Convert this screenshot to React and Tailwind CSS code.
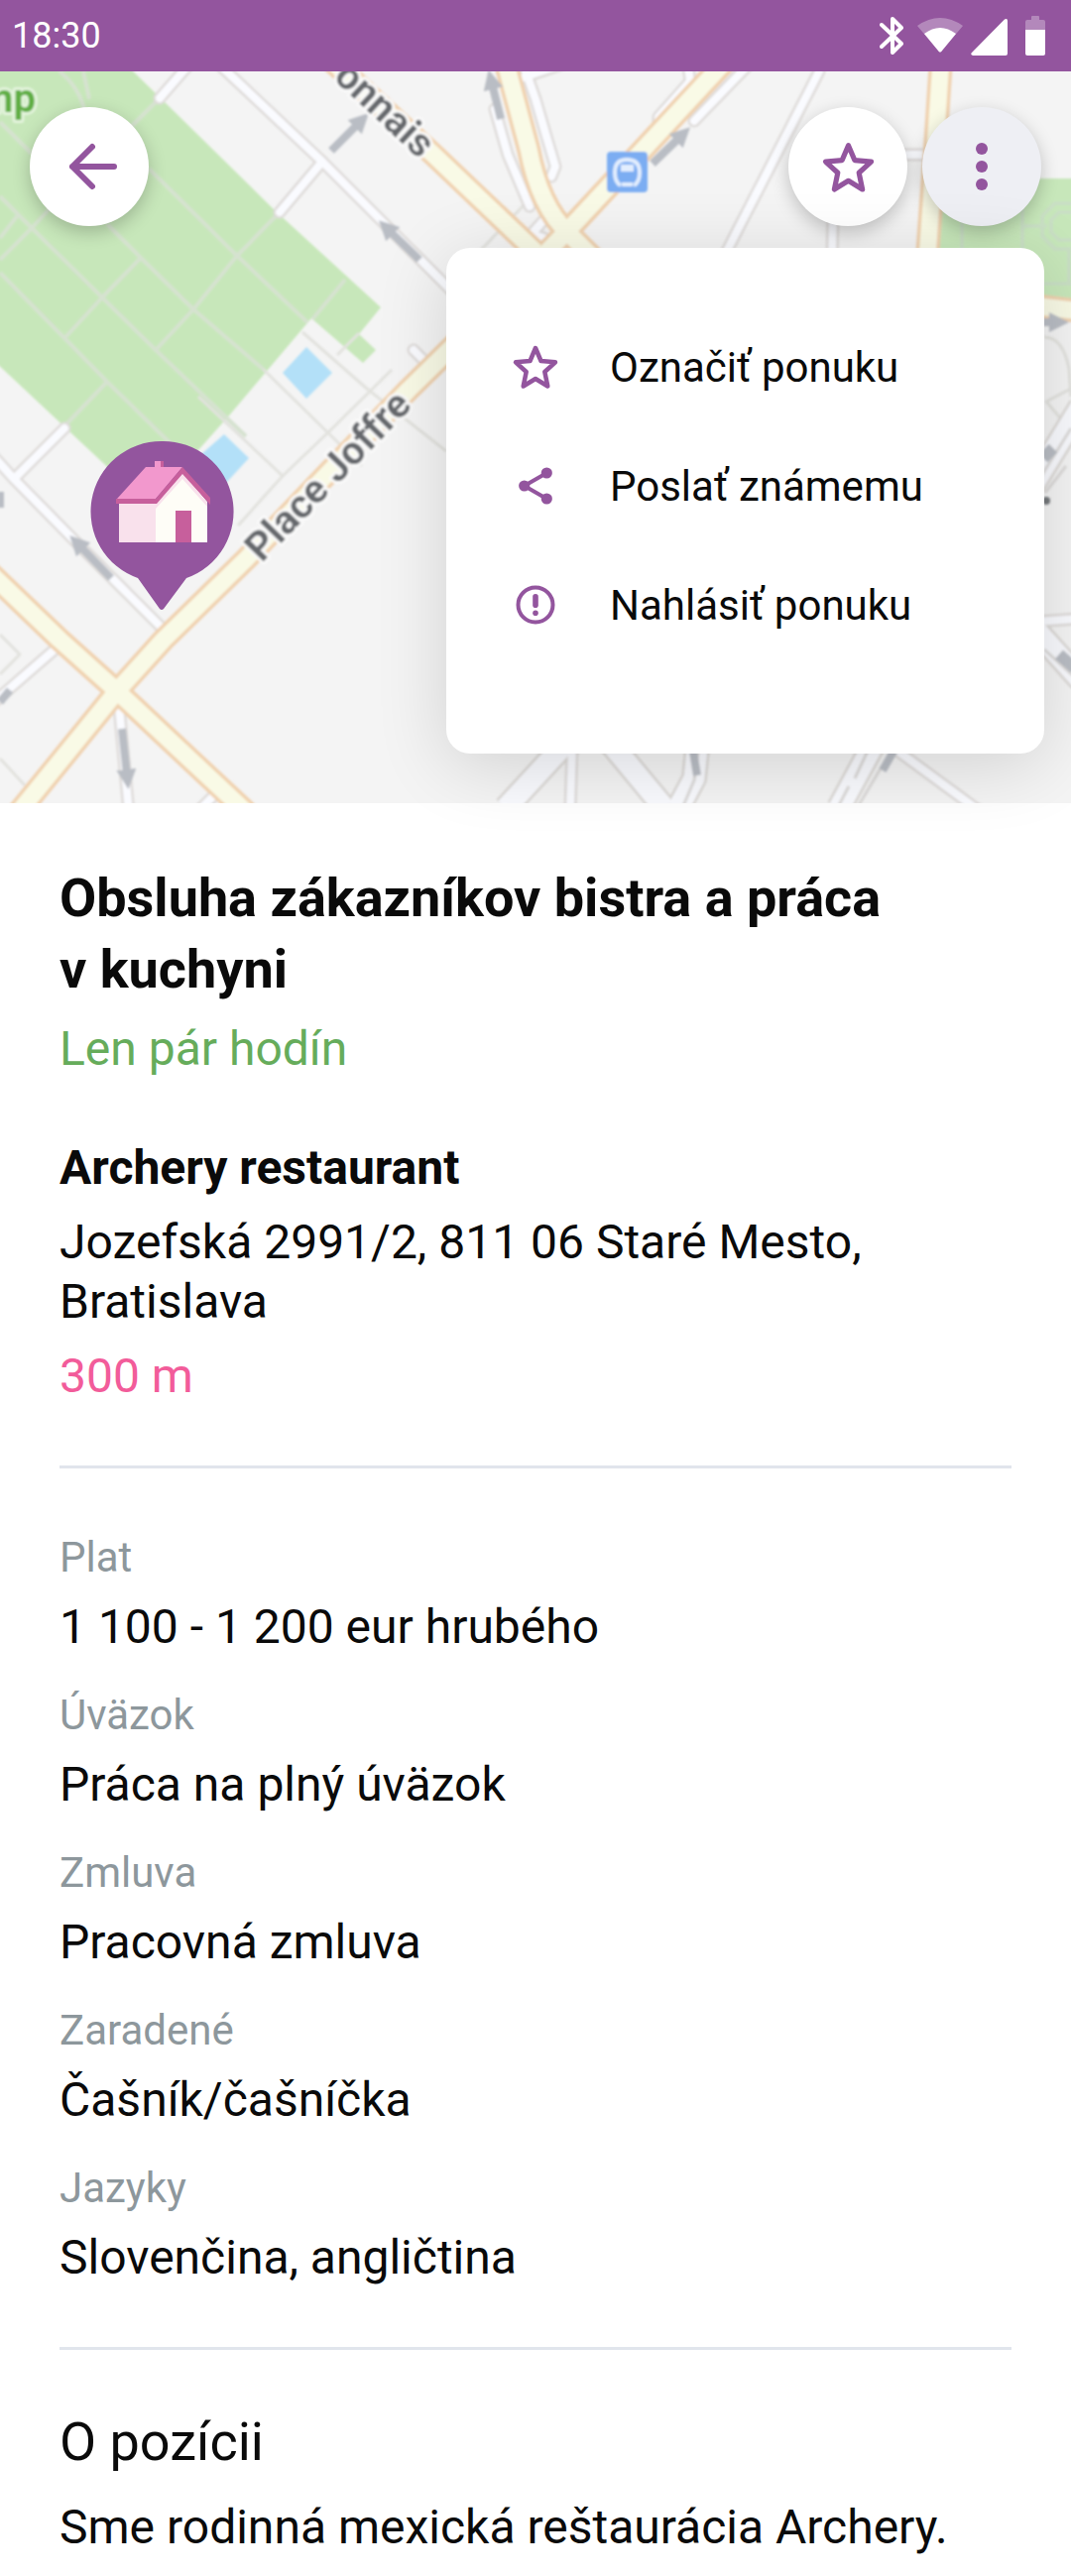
import React from 'react';

const details = [
  { label: 'Plat', value: '1 100 - 1 200 eur hrubého' },
  { label: 'Úväzok', value: 'Práca na plný úväzok' },
  { label: 'Zmluva', value: 'Pracovná zmluva' },
  { label: 'Zaradené', value: 'Čašník/čašníčka' },
  { label: 'Jazyky', value: 'Slovenčina, angličtina' },
];

// main streets, yellow with orange edges
const mainRoads = [
  'M320 48 L436 155 L540 254',
  'M509 60 L533 150 Q544 208 573 235 L600 262',
  'M733 60 L640 160 L573 232 L536 270',
  'M949 60 L943 150 L935 260',
  'M1040 308 L1090 314',
  'M-10 578 L60 645 L118 697 L260 830',
  'M10 830 L118 697 L165 645 L248 564 L330 478 L412 393 L460 346',
];

// side streets, white with grey edges
const sideRoads = [
  'M188 68 L161 99',
  'M222 66 L325 163 L385 223 L460 298',
  'M325 163 L282 214',
  'M499 110 L512 156 L534 208',
  'M526 60 L540 100 L560 168 L556 178',
  'M528 78 L575 62',
  'M826 72 L732 255',
  'M912 156 L936 156',
  'M840 220 L839 260',
  'M760 60 L700 122',
  'M694 68 L696 82 L664 118 L664 132',
  'M552 218 L536 236 L548 240',
  'M65 432 L14 483',
  'M-5 462 L14 483 L75 545 L168 638',
  'M54 656 L-6 708',
  'M120 712 L130 820',
  'M218 800 L198 820',
  'M417 353 L434 370',
  'M1045 627 L1085 624',
  'M577 755 L575 815',
  'M902 755 L985 816',
];

const wideRoads = [
  'M570 750 L510 815',
  'M612 745 L670 815',
  'M704 745 L700 785 L684 815',
  'M884 745 L846 815',
  'M1090 410 L1035 500',
  'M1035 625 L1090 686',
];

// footpaths crossing the park
const parkPaths = [
  'M0 123 L32 155',
  'M0 198 L32 230 L103 300 L157 353 L248 440',
  'M108 226 L142 260 L195 312 L265 372',
  'M150 170 L239 258 L310 325',
  'M0 275 L65 341 L108 385 L180 455',
  'M0 262 L32 230 L55 205',
  'M0 240 L18 217',
  'M65 341 L103 300 L142 260',
  'M60 435 L108 385',
  'M157 353 L195 312 L239 258 L282 214',
  'M315 322 L348 282',
  'M60 72 Q86 92 88 130',
  'M84 72 L90 100',
  'M160 100 L130 130',
];

const footPaths = [
  'M265 372 L365 470',
  'M305 335 L370 392 L450 455',
  'M200 400 L285 480 L240 530',
  'M285 480 L330 437 L395 373',
  'M340 358 L362 336',
  'M0 640 L20 660 L0 680',
  'M0 765 L25 792',
  'M485 252 L530 205',
  'M1053 340 Q1072 340 1078 372 L1080 400',
  'M1072 425 L1055 405 L1080 392',
];

const arrows = [
  'M334 152 L362 124',
  'M423 262 L392 232',
  'M505 120 L496 84',
  'M658 165 L686 138',
  'M112 583 L80 550',
  'M123 735 L128 782',
  'M1052 325 L1064 325',
];

const StreetMap = () => (
  <svg
    viewBox="0 72 1080 738"
    preserveAspectRatio="xMidYMid slice"
    className="absolute inset-0 h-full w-full"
    aria-hidden="true"
  >
    <defs>
      <marker id="tip" viewBox="0 0 10 10" refX="3" refY="5" markerWidth="20" markerHeight="20" markerUnits="userSpaceOnUse" orient="auto">
        <path d="M0 0 L10 5 L0 10 Z" fill="#b9bdc4" />
      </marker>
      <filter id="soft" x="0" y="0" width="100%" height="100%">
        <feGaussianBlur stdDeviation="1" />
      </filter>
    </defs>
    <rect x="0" y="72" width="1080" height="738" fill="#f4f4f4" />
    <g filter="url(#soft)" fill="none" strokeLinejoin="round">
      {/* parks */}
      <path d="M-5 60 H122 L165 102 L278 213 L384 310 L362 337 L379 353 L366 366 L314 321 L232 418 L150 510 L-5 365 Z" fill="#c7e7ba" />
      <path d="M946 180 H1090 V306 L942 300 Z" fill="#c7e7ba" />
      <path d="M970 222 V300 M1031 182 V286 H1090 M1031 228 H1056 M1090 205 H1064 L1051 218 V238 L1064 251 H1090 M1078 251 V286 M1090 214 H1068 L1060 222 V234 L1068 242 H1090" stroke="#c9dfc4" strokeWidth="4" />
      {/* water */}
      <path d="M309 350 L335 376 L309 402 L285 376 Z M226 438 L251 462 L228 487 L195 465 Z" fill="#b3e0f8" />

      <g stroke="#e2e2de" strokeWidth="3">
        {footPaths.map((d) => <path key={d} d={d} />)}
      </g>
      <g stroke="#d6e2d0" strokeWidth="4">
        {parkPaths.map((d) => <path key={d} d={d} />)}
      </g>

      <g stroke="#dfdcda" strokeWidth="13">
        {sideRoads.map((d) => <path key={d} d={d} strokeLinecap="round" />)}
      </g>
      <g stroke="#dcd9d6" strokeWidth="26">
        {wideRoads.map((d) => <path key={d} d={d} />)}
      </g>
      <g stroke="#f9fafe" strokeWidth="21">
        {wideRoads.map((d) => <path key={d} d={d} />)}
      </g>
      <g stroke="#fafbff" strokeWidth="8">
        {sideRoads.map((d) => <path key={d} d={d} strokeLinecap="round" />)}
      </g>
      <path d="M706 745 L700 787 L688 815 M876 755 L862 785 M856 793 L846 812 M888 775 L866 812 M1080 432 L1050 480 M1075 470 L1054 497 M1053 655 L1085 684" stroke="#dcdad9" strokeWidth="3" />

      <g stroke="#f0d2b0" strokeWidth="24">
        {mainRoads.map((d) => <path key={d} d={d} />)}
      </g>
      <g stroke="#f9fae6" strokeWidth="17">
        {mainRoads.map((d) => <path key={d} d={d} />)}
      </g>

      <g stroke="#b9bdc4" strokeWidth="8">
        {arrows.map((d) => <path key={d} d={d} markerEnd="url(#tip)" />)}
        <path d="M0 708 L10 696 M0 512 V496 M699 758 L703 782 M902 756 L890 777" />
        <path d="M1052 462 L1062 452 M1068 660 L1084 674" strokeWidth="12" />
      </g>
      <circle cx="1055" cy="505" r="4" fill="#74787c" />

      {/* metro stop */}
      <rect x="612" y="153" width="41" height="41" rx="4" fill="#7cadf2" />
      <path d="M626 187 Q620 184 620 174 Q620 161 632 161 Q645 161 645 174 Q645 184 639 187" stroke="#e3eefe" strokeWidth="4" />
      <path d="M626 166 H639 V173 H626 Z M627 184 H638 V188 H627 Z" fill="#e3eefe" />

      {/* street names */}
      <g className="font-bold" fontFamily="Roboto, sans-serif" fontSize="40" stroke="#fafafa" strokeWidth="6" paintOrder="stroke">
        <text x="36" y="113" textAnchor="end" fill="#5fae43" stroke="#e4f4dd">mp</text>
        <text transform="translate(423 161) rotate(43)" textAnchor="end" fill="#66696d">onnais</text>
        <text transform="translate(264 568) rotate(-46)" fill="#66696d">Place Joffre</text>
      </g>
    </g>

    {/* offer pin */}
    <path d="M163 445 A71 71 0 0 1 188 583 L165 614 Q163 616 161 614 L139 583 A71 71 0 0 1 163 445 Z" fill="#93559e" />
    <path d="M120 506 H160 V547 H120 Z" fill="#f9e1ec" />
    <path d="M157 508 L184 476 L209 506 V547 H157 Z" fill="#fefdf7" />
    <path d="M157 507 L184 477 L209 507 V511 L184 483 L157 513 Z" fill="#f9e1ec" />
    <path d="M156 465 H162 V473 H156 Z M147 471 H184 L157 503 H118 Z" fill="#f298cd" />
    <path d="M162 465 H165 V471 H162 Z M117 503 H157 L184 471 L212 502 V509 L184 478 L158 508 H117 Z M177 515 H193 V547 H177 Z" fill="#c75f9c" />
  </svg>
);

const StarIcon = ({ className }) => (
  <svg viewBox="-30 -30 60 60" className={className} fill="none" stroke="currentColor" strokeWidth="4.5" strokeLinejoin="round" aria-hidden="true">
    <path d="M0 -19 L5.5 -6 L20 -4.7 L9.3 5 L12.3 19.5 L0 12 L-12.3 19.5 L-9.3 5 L-20 -4.7 L-5.5 -6 Z" />
  </svg>
);

const ShareIcon = ({ className }) => (
  <svg viewBox="-30 -30 60 60" className={className} fill="currentColor" aria-hidden="true">
    <path d="M11.3 -13 L-11.3 0 L11.3 13" fill="none" stroke="currentColor" strokeWidth="4" />
    <circle cx="11.3" cy="-13" r="5.6" />
    <circle cx="-11.3" cy="0" r="5.6" />
    <circle cx="11.3" cy="13" r="5.6" />
  </svg>
);

const AlertIcon = ({ className }) => (
  <svg viewBox="-30 -30 60 60" className={className} fill="currentColor" aria-hidden="true">
    <circle r="17.5" fill="none" stroke="currentColor" strokeWidth="4" />
    <rect x="-2.8" y="-11" width="5.6" height="14" rx="2.8" />
    <circle cy="8.3" r="2.8" />
  </svg>
);

const menuItems = [
  { text: 'Označiť ponuku', Icon: StarIcon },
  { text: 'Poslať známemu', Icon: ShareIcon },
  { text: 'Nahlásiť ponuku', Icon: AlertIcon },
];

const StatusBar = () => (
  <div className="flex h-[72px] items-center justify-between bg-[#93559e] pl-3 pr-[26px] text-white">
    <span className="text-[36px] leading-[72px]">18:30</span>
    <div className="flex items-center gap-2">
      <svg width="28" height="72" fill="none" stroke="currentColor" strokeWidth="4" strokeLinecap="round" strokeLinejoin="round" aria-hidden="true">
        <path d="M2 25 L22 44 L13 53 V19 L22 28 L2 47" />
      </svg>
      <svg width="48" height="72" fill="currentColor" aria-hidden="true">
        <path d="M2 26 Q25 10 48 26 L27 51 Q25 54 23 51 Z" opacity="0.3" />
        <path d="M9 34 Q25 22 41 34 L27 51 Q25 54 23 51 Z" />
      </svg>
      <svg width="37" height="72" fill="currentColor" aria-hidden="true">
        <path d="M1 53 L34 19.500 Q37 18 37 21 V54 Q37 56 35 56 H2 Q-1 55 1 53 Z" />
      </svg>
      <svg width="30" height="72" fill="currentColor" aria-hidden="true">
        <path d="M10 30 V22 Q10 20 12 20 H16 V17 Q16 16 17 16 H23 Q24 16 24 17 V20 H28 Q30 20 30 22 V30 Z" opacity="0.3" />
        <path d="M10 30 H30 V54 Q30 56 28 56 H12 Q10 56 10 54 Z" />
      </svg>
    </div>
  </div>
);

const RoundButton = ({ label, active, children }) => (
  <button
    type="button"
    aria-label={label}
    className={`flex h-[120px] w-[120px] items-center justify-center rounded-full text-[#93559e] shadow-[0_6px_18px_rgba(0,0,0,0.22)] ${
      active ? 'bg-[#eeeff4]' : 'bg-white'
    }`}
  >
    {children}
  </button>
);

const App = () => {
  return (
    <div className="min-h-screen bg-white font-[Roboto,sans-serif] text-[#0a0a0a]">
      <StatusBar />

      <header className="relative h-[738px]">
        <StreetMap />

        <div className="relative flex items-center justify-between px-[30px] pt-9">
          <RoundButton label="Späť">
            <svg width="60" height="60" viewBox="-30 -30 60 60" fill="none" stroke="currentColor" strokeWidth="6" strokeLinecap="round" strokeLinejoin="round" aria-hidden="true">
              <path d="M25 0 H-17 M3 -20 L-17 0 L3 20" />
            </svg>
          </RoundButton>
          <div className="flex gap-[15px]">
            <RoundButton label="Označiť ponuku">
              <StarIcon className="h-[69px] w-[69px]" />
            </RoundButton>
            <RoundButton label="Viac možností" active>
              <svg width="60" height="60" viewBox="-30 -30 60 60" fill="currentColor" aria-hidden="true">
                <circle cy="-18" r="6" />
                <circle r="6" />
                <circle cy="18" r="6" />
              </svg>
            </RoundButton>
          </div>
        </div>

        {/* menu */}
        <ul className="absolute right-[27px] top-[178px] z-10 w-[603px] rounded-3xl bg-white px-[60px] pb-[90px] pt-[60px] shadow-[0_12px_72px_rgba(0,0,0,0.14)]">
          {menuItems.map(({ text, Icon }) => (
            <li key={text}>
              <button type="button" className="flex h-[120px] w-full items-center gap-[45px] text-left text-[42px]">
                <Icon className="h-[60px] w-[60px] text-[#93559e]" />
                {text}
              </button>
            </li>
          ))}
        </ul>
      </header>

      <main className="px-[60px] pt-[60px] text-[48px] leading-[60px]">
        <section className="border-b-[3px] border-[#e1e5ec] pb-[60px]">
          <h1 className="text-[54px] font-bold leading-[72px]">
            Obsluha zákazníkov bistra a práca v&nbsp;kuchyni
          </h1>
          <p className="mt-[14px] text-[#66ac5b]">Len pár hodín</p>
          <h2 className="mt-[60px] font-bold">Archery restaurant</h2>
          <p className="mt-[15px]">Jozefská 2991/2, 811 06 Staré Mesto, Bratislava</p>
          <p className="mt-[15px] text-[#f25c9a]">300 m</p>
        </section>

        <dl className="flex flex-col gap-[29px] border-b-[3px] border-[#e1e5ec] py-[60px]">
          {details.map((item) => (
            <div key={item.label}>
              <dt className="text-[42px] text-[#8d979c]">{item.label}</dt>
              <dd className="mt-[10px]">{item.value}</dd>
            </div>
          ))}
        </dl>

        <section className="pt-[57px]">
          <h2 className="text-[54px] leading-[72px]">O pozícii</h2>
          <p className="mt-5">Sme rodinná mexická reštaurácia Archery.</p>
        </section>
      </main>
    </div>
  );
};

export default App;
